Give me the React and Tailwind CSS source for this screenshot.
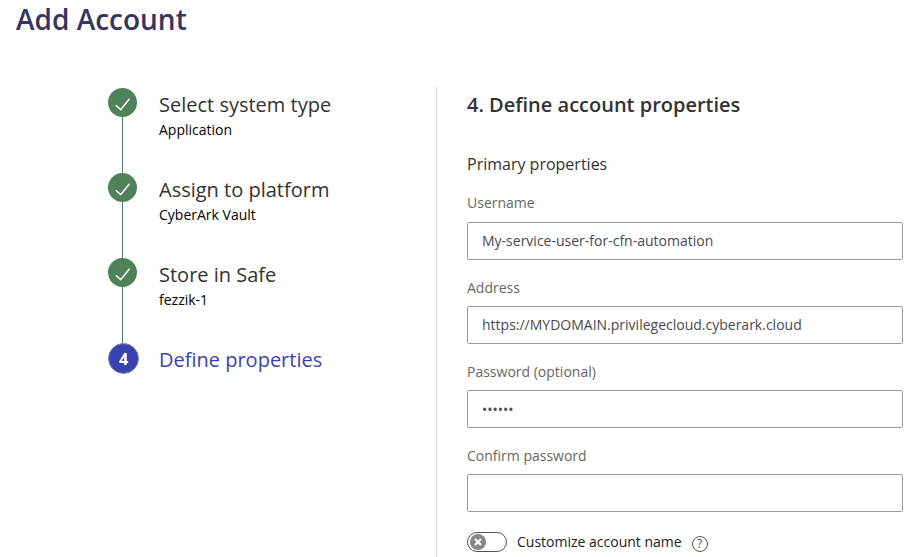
const steps = [
  { title: 'Select system type', detail: 'Application' },
  { title: 'Assign to platform', detail: 'CyberArk Vault' },
  { title: 'Store in Safe', detail: 'fezzik-1' },
];

function DoneStep({ title, detail }) {
  return (
    <li className="flex h-[85px]">
      <div className="flex w-[29px] flex-col items-center">
        <svg className="size-[29px] shrink-0" viewBox="0 0 29 29" fill="none">
          <circle cx="14.5" cy="14.5" r="14.5" fill="#50825a" />
          <path d="M7.8 17.3 L12.7 21.6 L21.5 10.8" stroke="#fff" strokeWidth="1.5" />
        </svg>
        <div className="w-px flex-1 bg-[#50825a]" />
      </div>
      <div className="ml-[22px] pt-[3px]">
        <div className="text-[20px] leading-[28px] text-[#333]">{title}</div>
        <div className="text-[14px] leading-[22px] text-black">{detail}</div>
      </div>
    </li>
  );
}

function Field({ label, value, secret }) {
  return (
    <label className="mb-[16px] block">
      <span className="block h-[30px] text-[14px] leading-[24px] text-[#666]">{label}</span>
      <span
        className={`flex h-[38px] items-center rounded-[2px] border border-[#9b9b9b] px-[14px] text-[14px] text-[#484852] ${secret ? '' : 'pb-[2px]'}`}
      >
        {value}
      </span>
    </label>
  );
}

export default function App() {
  return (
    <div className="h-[557px] w-[920px] overflow-hidden bg-white font-['Open_Sans',sans-serif]">
      <h1 className="h-[87px] pl-[16px] text-[28px] leading-[38px] font-semibold text-[#363560]">Add Account</h1>
      <div className="flex h-[470px]">
        <ol className="w-[436px] shrink-0 pt-px pl-[108px]">
          {steps.map((s) => (
            <DoneStep key={s.title} {...s} />
          ))}
          <li className="flex">
            <div className="flex size-[31px] items-center justify-center rounded-full border border-[#818b9d] bg-[#3943b0] text-[16px] font-bold text-white">
              4
            </div>
            <div className="ml-[20px] pt-[3px] text-[20px] leading-[28px] text-[#3943b0]">Define properties</div>
          </li>
        </ol>
        <section className="flex-1 border-l border-[#d4d4d4] pr-[17px] pl-[30px]">
          <h2 className="pt-[4px] text-[20px] leading-[28px] font-semibold text-[#333]">4. Define account properties</h2>
          <h3 className="mt-[33px] mb-[15px] text-[16px] leading-[24px] text-[#333]">Primary properties</h3>
          <div className="pt-px [&>label:first-child>span:first-child]:leading-[22px]">
            <Field label="Username" value="My-service-user-for-cfn-automation" />
            <Field label="Address" value="https://MYDOMAIN.privilegecloud.cyberark.cloud" />
            <Field label="Password (optional)" value="••••••" secret />
            <Field label="Confirm password" value="" secret />
          </div>
          <div className="mt-[20px] flex items-center">
            <svg className="h-[20px] w-[40px]" viewBox="0 0 40 20" fill="none">
              <rect x="0.5" y="0.5" width="39" height="19" rx="9.5" stroke="#555" />
              <circle cx="11" cy="10" r="8" fill="#888" />
              <path d="M8 7 L14 13 M14 7 L8 13" stroke="#fff" strokeWidth="2.2" />
            </svg>
            <span className="ml-[10px] text-[14px] leading-[20px] text-[#222]">Customize account name</span>
            <span className="mt-[3px] ml-[10px] flex size-[16px] items-center justify-center rounded-full border border-[#555] text-[12px] leading-[14px] text-[#444]">
              ?
            </span>
          </div>
        </section>
      </div>
    </div>
  );
}
